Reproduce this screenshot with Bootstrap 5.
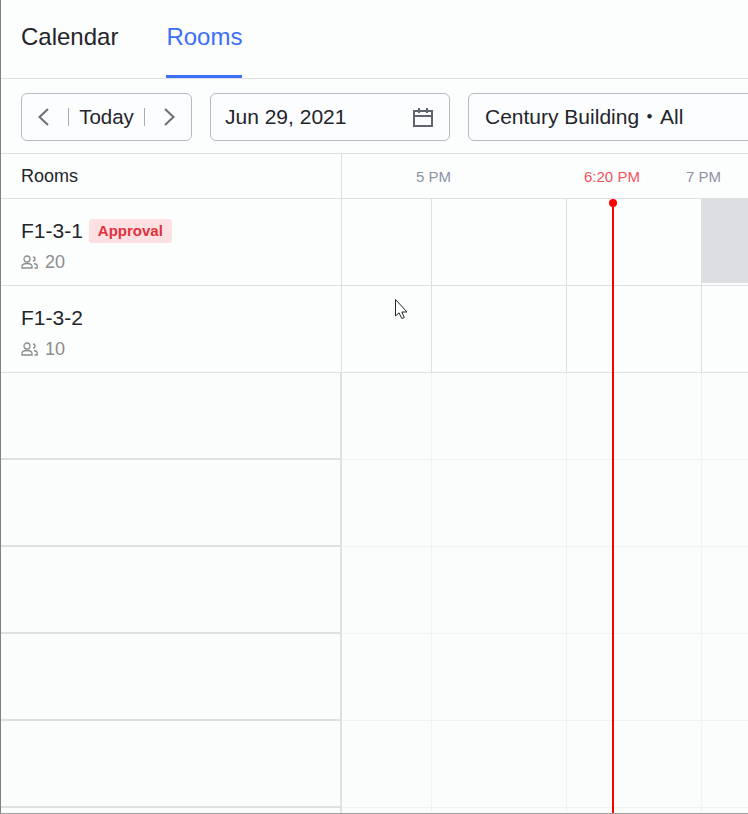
<!DOCTYPE html>
<html lang="en">

<head>
    <meta charset="utf-8">
    <meta name="viewport" content="width=device-width, initial-scale=1">
    <title>Rooms</title>

    <link href="https://cdn.jsdelivr.net/npm/bootstrap@5.3.3/dist/css/bootstrap.min.css" rel="stylesheet">
    <style>
        html, body { height: 100%; overflow: hidden; }
        body { background: #fcfdfd; font-family: "Liberation Sans", "Noto Sans CJK SC", sans-serif; color: #23252b; }
        .page-frame { position: relative; width: 748px; height: 814px; overflow: hidden; border-left: 1px solid #808080; border-bottom: 1px solid #a0a0a0; }

        /* tabs */
        .tab-bar { height: 79px; padding-left: 20px; gap: 48px; border-bottom: 1px solid #dfe0e4; flex-wrap: nowrap; }
        .tab-bar .nav-link { height: 78px; padding: 23px 0 0; font-size: 24px; line-height: 28px; color: #23252b; border-bottom: 3px solid transparent; }
        .tab-bar .nav-link.active { color: #3d6ff5; border-bottom-color: #3d6ff5; }

        /* toolbar */
        .tool-bar { width: 1000px; height: 75px; padding: 14px 0 0 20px; gap: 18px; border-bottom: 1px solid #dfe0e4; }
        .tool-box { height: 48px; border: 1px solid #b9bac3; border-radius: 6px; background: #fcfdfe; color: #23252b; padding: 0; }
        .today-box { width: 171px; }
        .today-nav { width: 46px; }
        .today-label { width: 77px; height: 18px; font-size: 20.500px; line-height: 18px; border-left: 1px solid #a9abb3; border-right: 1px solid #a9abb3; }
        .date-box { width: 240px; padding: 0 16px 0 14px; font-size: 21px; }
        .place-box { width: 320px; padding: 0 16px; font-size: 21px; }

        /* schedule */
        .head-row { height: 45px; border-bottom: 1px solid #dfe0e4; }
        .room-col { width: 341px; flex: none; padding-left: 20px; border-right: 1px solid #dfe0e4; }
        .head-row .room-col { font-size: 18px; line-height: 44px; }
        .time-axis { font-size: 15px; line-height: 46px; color: #8b93a3; white-space: nowrap; }
        .time-5 { margin-left: 74px; }
        .time-now { margin-left: 133px; color: #f2535f; }
        .time-7 { margin-left: 46px; }

        .room-row { height: 87px; border-bottom: 1px solid #dfe0e4; }
        .room-row .room-col { padding-top: 20px; }
        .room-name { font-size: 21px; line-height: 24px; }
        .status-tag { height: 24px; padding: 0 9px; margin-left: 6px; border-radius: 3px; background: #fde0e2; color: #e0313d; font-size: 15px; font-weight: 700; line-height: 24px; }
        .room-size { margin-top: 8px; font-size: 18px; line-height: 22px; color: #8c8c8c; gap: 7px; }

        .slot { flex: none; width: 135px; border-right: 1px solid #dfe0e4; }
        .slot-first { width: 90px; }
        .slot-last { flex: 1 1 auto; border-right: 0; }
        .slot-busy { background: #dddee2; height: 85px; margin: -1px 0 0 -1px; }

        .empty-row { border-bottom: 0; }
        .empty-row .room-col { width: 341px; padding: 0; border-right: 2px solid #dfe0e4; border-bottom: 2px solid #dfe0e4; }
        .empty-row .slot { border-right-color: #f0f1f2; }
        .empty-row .slot-wrap { border-bottom: 1px solid #f0f1f2; }
        .empty-bg { background: #fbfdfc; }

        /* overlays */
        .now-line { position: absolute; left: 611px; top: 199px; bottom: 0; width: 2px; background: #f00; }
        .now-line::before { content: ""; position: absolute; left: -3px; top: 0; width: 8px; height: 8px; border-radius: 50%; background: #f00; }
        .mouse-arrow { position: absolute; left: 393px; top: 298px; }
    </style>
</head>

<body>
    <div class="page-frame">
        <!-- Tabs -->
        <ul class="nav tab-bar">
            <li class="nav-item"><a class="nav-link" href="#">Calendar</a></li>
            <li class="nav-item"><a class="nav-link active" href="#">Rooms</a></li>
        </ul>

        <!-- Toolbar -->
        <div class="d-flex tool-bar">
            <div class="tool-box today-box d-flex align-items-center">
                <span class="today-nav d-flex justify-content-center">
                    <svg width="14" height="20" viewBox="0 0 14 20" fill="none" stroke="#6b6e78" stroke-width="2"><path d="M10 2 1.500 10 10 18"/></svg>
                </span>
                <span class="today-label text-center">Today</span>
                <span class="today-nav d-flex justify-content-center">
                    <svg width="14" height="20" viewBox="0 0 14 20" fill="none" stroke="#6b6e78" stroke-width="2"><path d="M4 2 12.500 10 4 18"/></svg>
                </span>
            </div>
            <div class="tool-box date-box d-flex align-items-center justify-content-between">
                <span>Jun 29, 2021</span>
                <svg width="20" height="20" viewBox="0 0 20 20" fill="none" stroke="#5f646e" stroke-width="2"><path d="M1 4h18v15H1zM1 9h18M6 1v5M14 1v5"/></svg>
            </div>
            <div class="tool-box place-box d-flex align-items-center">Century Building・All</div>
        </div>

        <!-- Header -->
        <div class="d-flex head-row">
            <div class="room-col">Rooms</div>
            <div class="d-flex time-axis">
                <span class="time-5">5 PM</span>
                <span class="time-now">6:20 PM</span>
                <span class="time-7">7 PM</span>
            </div>
        </div>

        <!-- Rooms -->
        <div class="d-flex room-row">
            <div class="room-col">
                <div class="d-flex room-name">F1-3-1<span class="status-tag">Approval</span></div>
                <div class="d-flex align-items-center room-size">
                    <svg width="17" height="14" viewBox="0 0 17 14" fill="none" stroke="#8c8c8c" stroke-width="1.300"><circle cx="6" cy="4" r="3"/><path d="M1 13v-1.500C1 9.500 3 8.500 6 8.500s5 1 5 3V13zM12 2a2 2 0 0 1 0 4M13 8.500c2 .3 3.200 1.200 3.200 2.700V13H13.500"/></svg>
                    <span>20</span>
                </div>
            </div>
            <div class="slot slot-first"></div>
            <div class="slot"></div>
            <div class="slot"></div>
            <div class="slot slot-last slot-busy"></div>
        </div>
        <div class="d-flex room-row">
            <div class="room-col">
                <div class="d-flex room-name">F1-3-2</div>
                <div class="d-flex align-items-center room-size">
                    <svg width="17" height="14" viewBox="0 0 17 14" fill="none" stroke="#8c8c8c" stroke-width="1.300"><circle cx="6" cy="4" r="3"/><path d="M1 13v-1.500C1 9.500 3 8.500 6 8.500s5 1 5 3V13zM12 2a2 2 0 0 1 0 4M13 8.500c2 .3 3.200 1.200 3.200 2.700V13H13.500"/></svg>
                    <span>10</span>
                </div>
            </div>
            <div class="slot slot-first"></div>
            <div class="slot"></div>
            <div class="slot"></div>
            <div class="slot slot-last"></div>
        </div>

        <!-- Empty rows -->
        <div class="empty-bg">
            <div class="d-flex room-row empty-row"><div class="room-col"></div><div class="d-flex flex-grow-1 slot-wrap"><div class="slot slot-first"></div><div class="slot"></div><div class="slot"></div></div></div>
            <div class="d-flex room-row empty-row"><div class="room-col"></div><div class="d-flex flex-grow-1 slot-wrap"><div class="slot slot-first"></div><div class="slot"></div><div class="slot"></div></div></div>
            <div class="d-flex room-row empty-row"><div class="room-col"></div><div class="d-flex flex-grow-1 slot-wrap"><div class="slot slot-first"></div><div class="slot"></div><div class="slot"></div></div></div>
            <div class="d-flex room-row empty-row"><div class="room-col"></div><div class="d-flex flex-grow-1 slot-wrap"><div class="slot slot-first"></div><div class="slot"></div><div class="slot"></div></div></div>
            <div class="d-flex room-row empty-row"><div class="room-col"></div><div class="d-flex flex-grow-1 slot-wrap"><div class="slot slot-first"></div><div class="slot"></div><div class="slot"></div></div></div>
            <div class="d-flex room-row empty-row"><div class="room-col"></div><div class="d-flex flex-grow-1 slot-wrap"><div class="slot slot-first"></div><div class="slot"></div><div class="slot"></div></div></div>
        </div>

        <!-- Now marker and pointer -->
        <div class="now-line"></div>
        <svg class="mouse-arrow" width="14" height="22" viewBox="0 0 14 22" fill="#fff" stroke="#23252b" stroke-width="1"><path d="M1.500 1.500V18L5 14.800 7.800 20.500 10.300 19.500 7.800 14H13z"/></svg>
    </div>

    <script src="https://cdn.jsdelivr.net/npm/bootstrap@5.3.3/dist/js/bootstrap.bundle.min.js"></script>
</body>

</html>
